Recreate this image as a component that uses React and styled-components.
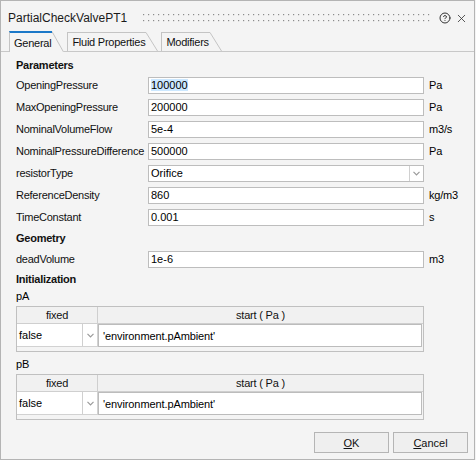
import React from "react";
import styled, { createGlobalStyle } from "styled-components";
import { CircleHelp, X } from "lucide-react";

const GlobalStyle = createGlobalStyle`
  html, body { margin: 0; padding: 0; background: #f4f4f4; }
  * { box-sizing: border-box; }
  body { font-family: "Liberation Sans", Arial, sans-serif; font-size: 11px; color: #000; }
`;

const Window = styled.div`
  width: 475px;
  height: 460px;
  border: 1px solid #b4b4b4;
  background: #f4f4f4;
  display: flex;
  flex-direction: column;
`;

const TitleBar = styled.div`
  height: 30px;
  padding: 4px 6px 0 7px;
  display: flex;
  align-items: center;
`;

const Title = styled.div`
  font-size: 12px;
  color: #1a1a1a;
  white-space: nowrap;
`;

const Grip = styled.svg`
  flex: 1;
  height: 8px;
  margin: 0 8px 0 16px;
`;

const IconBtn = styled.span`
  display: inline-flex;
  width: 14px;
  height: 14px;
  align-items: center;
  justify-content: center;
  color: #333;
  margin-left: ${(p) => p.$gap || 0}px;
`;

const TabRow = styled.div`
  height: 20px;
  display: flex;
  align-items: flex-end;
  padding-left: 8px;
  gap: 3px;
  position: relative;
  z-index: 1;
`;

const Tab = styled.div`
  display: flex;
  height: ${(p) => (p.$active ? 21 : 19)}px;
  margin-bottom: ${(p) => (p.$active ? -1 : 0)}px;
  margin-right: ${(p) => p.$mr || 0}px;
`;

const TabBody = styled.div`
  background: #f4f4f4;
  border-left: 1px solid #c4c4c4;
  border-top: ${(p) => (p.$active ? "2px solid #1b78c8" : "1px solid #c4c4c4")};
  padding: 0 1px 0 4px;
  display: flex;
  align-items: center;
  letter-spacing: -0.25px;
  color: #111;
  white-space: nowrap;
`;

const Slant = styled.svg`
  width: 12px;
  height: 100%;
  display: block;
`;

const Pane = styled.div`
  flex: 1;
  border-top: 1px solid #c8c8c8;
  padding: 4px 15px 0 15px;
  display: flex;
  flex-direction: column;
`;

const Heading = styled.div`
  height: ${(p) => p.$h || 18}px;
  display: flex;
  align-items: center;
  font-weight: bold;
  letter-spacing: -0.25px;
  color: #111;
`;

const Row = styled.div`
  display: grid;
  grid-template-columns: 132px 276px auto;
  height: 22px;
  align-items: center;
`;

const Label = styled.div`
  letter-spacing: -0.25px;
  color: #111;
  white-space: nowrap;
`;

const Input = styled.div`
  height: 17px;
  background: #fff;
  border: 1px solid #bdbdbd;
  padding: 0 2px;
  display: flex;
  align-items: center;
  white-space: nowrap;
  overflow: hidden;
`;

const Sel = styled.span`
  background: #cce8ff;
`;

const Combo = styled.div`
  height: 17px;
  background: #fff;
  border: 1px solid #bdbdbd;
  display: flex;
  align-items: stretch;
`;

const ComboText = styled.div`
  flex: 1;
  padding: 0 2px;
  display: flex;
  align-items: center;
`;

const ComboBtn = styled.div`
  width: ${(p) => p.$w || 15}px;
  border-left: 1px solid #d0d0d0;
  display: flex;
  align-items: center;
  justify-content: center;
`;

const Unit = styled.div`
  padding-left: 5px;
  letter-spacing: -0.2px;
`;

const SubLabel = styled.div`
  height: 18px;
  display: flex;
  align-items: center;
  margin-top: ${(p) => p.$mt || 0}px;
`;

const Table = styled.div`
  width: 408px;
  margin-top: 1px;
  border: 1px solid #c0c0c0;
  padding-bottom: 4px;
  background: #f4f4f4;
`;

const THead = styled.div`
  display: grid;
  grid-template-columns: 81px 1fr;
  height: 17px;
  background: #f1f1f1;
  border-bottom: 1px solid #cfcfcf;
`;

const TH = styled.div`
  display: flex;
  align-items: center;
  justify-content: center;
  border-right: ${(p) => (p.$last ? "none" : "1px solid #cfcfcf")};
  letter-spacing: -0.2px;
  color: #111;
`;

const TRow = styled.div`
  display: grid;
  grid-template-columns: 81px 1fr;
  height: 23px;
`;

const CellCombo = styled.div`
  display: flex;
  background: #fff;
  border-right: 1px solid #d2d2d2;
  border-bottom: 1px solid #d2d2d2;
`;

const CellText = styled.div`
  background: #fff;
  border: 1px solid #bcbcbc;
  margin-right: 1px;
  padding-left: 4px;
  display: flex;
  align-items: center;
  letter-spacing: -0.1px;
`;

const Footer = styled.div`
  margin-top: auto;
  display: flex;
  justify-content: flex-end;
  gap: 4px;
  padding: 0 6px 6px 0;
`;

const Button = styled.button`
  width: 75px;
  height: 21px;
  border: 1px solid #b5b5b5;
  background: #efefef;
  font-family: inherit;
  font-size: 11px;
  color: #111;
  padding: 0;
  u { text-decoration: underline; text-underline-offset: 1px; }
`;

const Chevron = () => (
  <svg width="7" height="5" viewBox="0 0 7 5">
    <path d="M0.5 0.8 L3.5 3.8 L6.5 0.8" fill="none" stroke="#9a9a9a" strokeWidth="1.2" />
  </svg>
);

const TabItem = ({ label, active, mr }) => (
  <Tab $active={active} $mr={mr}>
    <TabBody $active={active}>{label}</TabBody>
    <Slant viewBox="0 0 12 20" preserveAspectRatio="none">
      <path d="M0 0 L12 20 L0 20 Z" fill="#f4f4f4" />
      <path d="M0 0.5 L11.5 20" fill="none" stroke="#c4c4c4" strokeWidth="1" vectorEffect="non-scaling-stroke" />
    </Slant>
  </Tab>
);

const params = [
  { label: "OpeningPressure", value: "100000", unit: "Pa", sel: true },
  { label: "MaxOpeningPressure", value: "200000", unit: "Pa" },
  { label: "NominalVolumeFlow", value: "5e-4", unit: "m3/s" },
  { label: "NominalPressureDifference", value: "500000", unit: "Pa" },
  { label: "resistorType", value: "Orifice", combo: true },
  { label: "ReferenceDensity", value: "860", unit: "kg/m3" },
  { label: "TimeConstant", value: "0.001", unit: "s" },
];

const StartTable = () => (
  <Table>
    <THead>
      <TH>fixed</TH>
      <TH $last>start ( Pa )</TH>
    </THead>
    <TRow>
      <CellCombo>
        <ComboText>false</ComboText>
        <ComboBtn $w={15}>
          <Chevron />
        </ComboBtn>
      </CellCombo>
      <CellText>'environment.pAmbient'</CellText>
    </TRow>
  </Table>
);

export default function App() {
  return (
    <>
      <GlobalStyle />
      <Window>
        <TitleBar>
          <Title>PartialCheckValvePT1</Title>
          <Grip>
            <defs>
              <pattern id="grip" width="5" height="6" patternUnits="userSpaceOnUse">
                <rect x="0" y="0" width="1.2" height="1.2" fill="#8c8c8c" />
              </pattern>
            </defs>
            <rect x="0" y="0" width="100%" height="8" fill="url(#grip)" />
          </Grip>
          <IconBtn>
            <CircleHelp size={12} strokeWidth={2} />
          </IconBtn>
          <IconBtn $gap={2}>
            <X size={13} strokeWidth={1.5} />
          </IconBtn>
        </TitleBar>
        <TabRow>
          <TabItem label="General" active />
          <TabItem label="Fluid Properties" />
          <TabItem label="Modifiers" />
        </TabRow>
        <Pane>
          <Heading>Parameters</Heading>
          {params.map((p) => (
            <Row key={p.label}>
              <Label>{p.label}</Label>
              {p.combo ? (
                <Combo>
                  <ComboText>{p.value}</ComboText>
                  <ComboBtn $w={14}>
                    <Chevron />
                  </ComboBtn>
                </Combo>
              ) : (
                <Input>{p.sel ? <Sel>{p.value}</Sel> : p.value}</Input>
              )}
              <Unit>{p.unit || ""}</Unit>
            </Row>
          ))}
          <Heading $h={20}>Geometry</Heading>
          <Row>
            <Label>deadVolume</Label>
            <Input>1e-6</Input>
            <Unit>m3</Unit>
          </Row>
          <Heading $h={17}>Initialization</Heading>
          <SubLabel>pA</SubLabel>
          <StartTable />
          <SubLabel $mt={3}>pB</SubLabel>
          <StartTable />
        </Pane>
        <Footer>
          <Button>
            <u>O</u>K
          </Button>
          <Button>
            <u>C</u>ancel
          </Button>
        </Footer>
      </Window>
    </>
  );
}
